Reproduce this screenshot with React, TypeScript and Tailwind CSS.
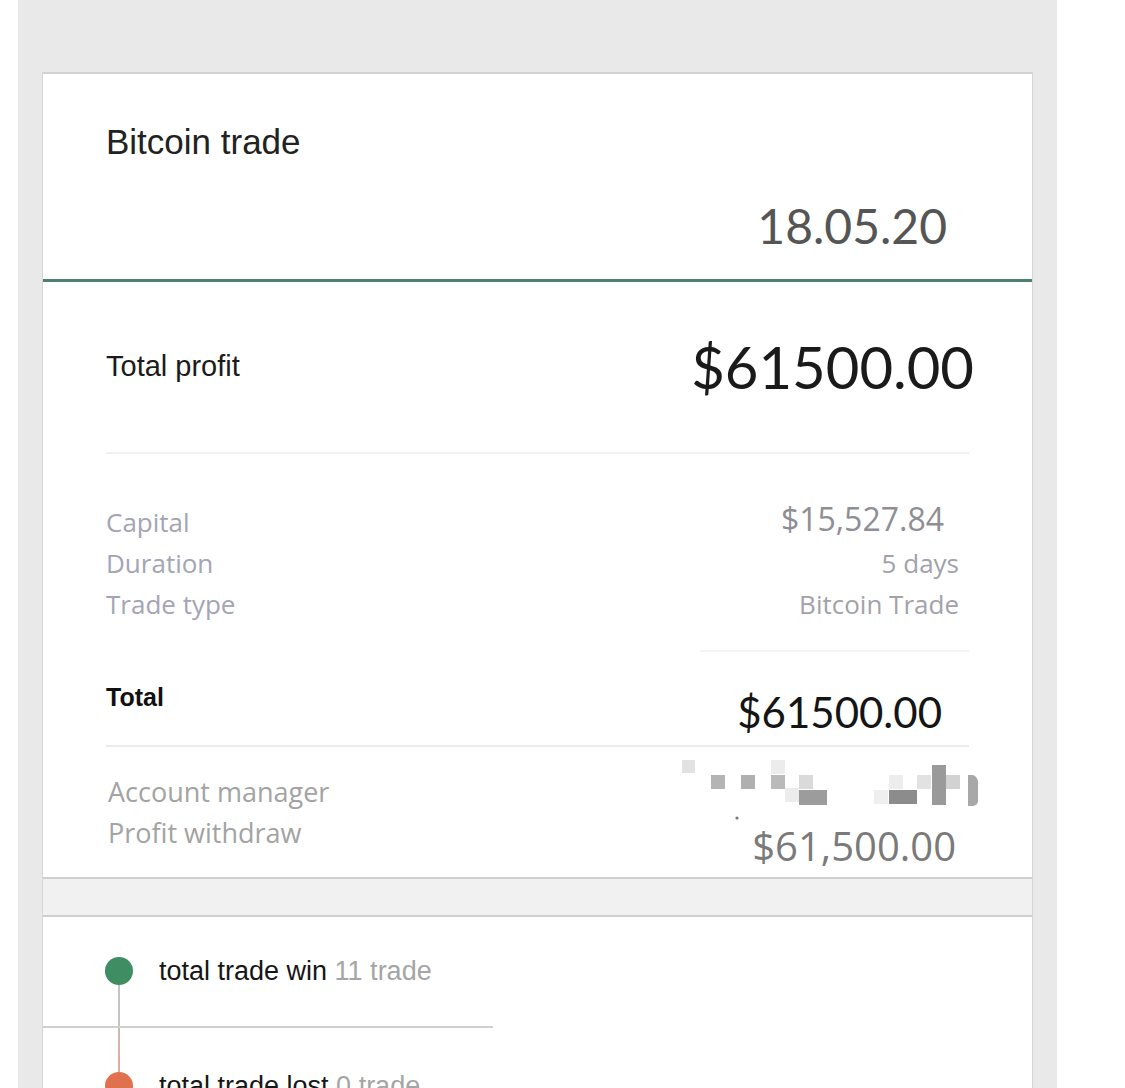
import React from "react";

const sans = "font-['Liberation_Sans',Arial,sans-serif]";
const lato = "font-['Lato','Open_Sans',sans-serif]";
const open = "font-['Open_Sans','Noto_Sans',sans-serif]";

function DetailRow({ label, value, extra = "" }: { label: string; value: string; extra?: string }) {
  return (
    <div className="flex h-[41px] items-center justify-between">
      <span className={`${open} text-[26px] text-[#a4a4b4]`}>{label}</span>
      <span className={`${open} text-[26px] text-[#a2a2aa] ${extra}`}>{value}</span>
    </div>
  );
}

// pixelated name that was blurred out in the original
function Redacted() {
  const blocks = [
    { x: 3, y: 2, w: 13, h: 13, c: "#e2e2e2" },
    { x: 32, y: 17, w: 14, h: 14, c: "#b4b4b4" },
    { x: 62, y: 17, w: 14, h: 14, c: "#b0b0b0" },
    { x: 92, y: 2, w: 14, h: 14, c: "#ececec" },
    { x: 92, y: 17, w: 14, h: 14, c: "#bababa" },
    { x: 106, y: 30, w: 14, h: 14, c: "#ececec" },
    { x: 120, y: 17, w: 14, h: 14, c: "#dadada" },
    { x: 120, y: 32, w: 28, h: 15, c: "#9c9c9c" },
    { x: 195, y: 32, w: 14, h: 14, c: "#efefef" },
    { x: 210, y: 32, w: 28, h: 14, c: "#8c8c8c" },
    { x: 210, y: 17, w: 14, h: 14, c: "#ededed" },
    { x: 238, y: 17, w: 14, h: 14, c: "#e2e2e2" },
    { x: 253, y: 7, w: 14, h: 40, c: "#9a9a9a" },
    { x: 267, y: 17, w: 14, h: 14, c: "#d2d2d2" },
  ];
  return (
    <svg width="300" height="64" viewBox="0 0 300 64" className="block">
      {blocks.map((b, i) => (
        <rect key={i} x={b.x} y={b.y} width={b.w} height={b.h} fill={b.c} />
      ))}
      <path d="M289 17 h4 a6 8 0 0 1 6 10 v16 a5 5 0 0 1 -5 5 h-5 z" fill="#a8a8a8" />
      <circle cx="58" cy="60" r="1.6" fill="#777" />
    </svg>
  );
}

export default function App() {
  return (
    <div className="h-[1088px] w-full overflow-hidden bg-white">
      <div className="ml-[18px] h-full w-[1039px] bg-[#e9e9e9] px-[24px] pt-[72px]">
        <div className="border border-t-2 border-[#d6d6d6] border-t-[#d2d2d2] bg-white">
          {/* header */}
          <div className="h-[205px] pl-[63px] pr-[85px] pt-[48px]">
            <h1 className={`${sans} text-[35px] leading-[40px] text-[#222]`}>Bitcoin trade</h1>
            <p className={`${lato} mt-[36px] text-right text-[48px] leading-[56px] text-[#555]`}>18.05.20</p>
          </div>
          <div className="h-[3px] bg-[#4d806e]" />

          {/* profit */}
          <div className="px-[63px]">
            <div className="mt-[50px] flex h-[70px] items-center justify-between">
              <span className={`${sans} text-[29px] text-[#1b1b1b]`}>Total profit</span>
              <span className={`${lato} -mr-[5px] text-[58px] leading-[70px] text-[#1a1a1a]`}>$61500.00</span>
            </div>
            <div className="mt-[50px] h-[2px] bg-[#f1f1f1]" />

            <div className="mt-[48px] pr-[10px]">
              <DetailRow label="Capital" value="$15,527.84" extra="!text-[32px] !text-[#8e8e94] mr-[15px] -mt-[8px]" />
              <DetailRow label="Duration" value="5 days" />
              <DetailRow label="Trade type" value="Bitcoin Trade" />
            </div>
            <div className="ml-[594px] mt-[25px] h-[2px] bg-[#f4f4f4]" />

            <div className="mt-[28px] flex h-[60px] items-start justify-between pr-[27px]">
              <span className={`${sans} text-[25px] font-bold leading-[34px] text-[#111]`}>Total</span>
              <span className={`${lato} mt-[4px] text-[42px] leading-[56px] text-[#151515]`}>$61500.00</span>
            </div>
            <div className="mt-[5px] h-[2px] bg-[#ececec]" />

            <div className="mt-[11px] flex items-start justify-between">
              <div className="pl-[2px] pt-[13px]">
                <p className={`${open} text-[27px] leading-[41px] text-[#a3a3a3]`}>Account manager</p>
                <p className={`${open} text-[27px] leading-[41px] text-[#a3a3a3]`}>Profit withdraw</p>
              </div>
              <div className="-mr-[10px] flex flex-col items-end">
                <Redacted />
                <p className={`${open} mr-[23px] text-[40px] leading-[48px] text-[#7a7a7a]`}>$61,500.00</p>
              </div>
            </div>
          </div>

          <div className="mt-[7px] h-[40px] border-y-2 border-[#cfcfcf] bg-[#f1f1f1]" />

          {/* trade timeline */}
          <div className="pt-[40px]">
            <div className="flex h-[28px] items-center pl-[62px]">
              <span className="h-[28px] w-[28px] shrink-0 rounded-full bg-[#3f8e63]" />
              <span className={`${sans} ml-[26px] text-[27px] text-[#161616]`}>
                total trade win <span className="text-[#a5a5a5]">11 trade</span>
              </span>
            </div>
            <div className="ml-[75px] h-[41px] w-[2px] bg-[#c4c4c4]" />
            <div className="h-[2px] w-[450px] bg-[#d0d0d0]" />
            <div className="ml-[75px] h-[44px] w-[2px] bg-gradient-to-b from-[#c4bcbb] to-[#e2a898]" />
            <div className="flex h-[28px] items-center pl-[62px]">
              <span className="h-[28px] w-[28px] shrink-0 rounded-full bg-[#e0714f]" />
              <span className={`${sans} ml-[26px] text-[27px] text-[#161616]`}>
                total trade lost <span className="text-[#a5a5a5]">0 trade</span>
              </span>
            </div>
            <div className="h-[40px]" />
          </div>
        </div>
      </div>
    </div>
  );
}
